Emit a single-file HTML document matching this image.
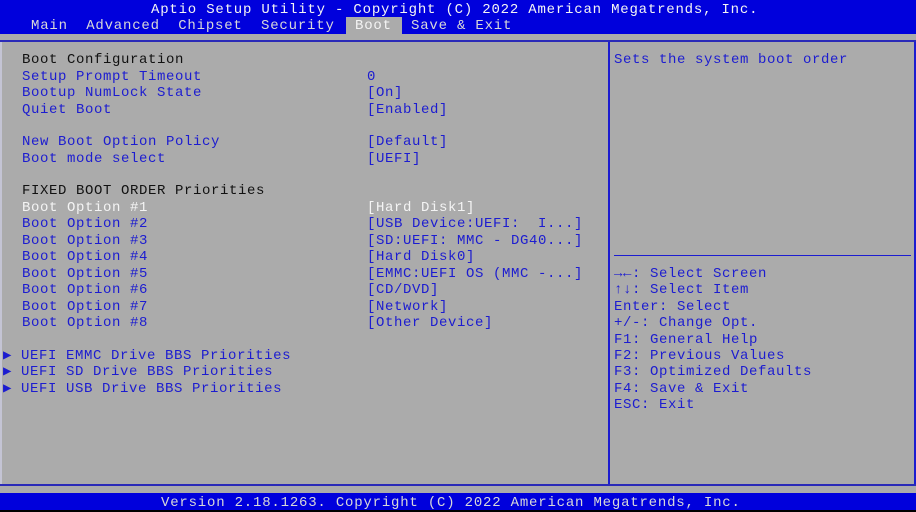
<!DOCTYPE html>
<html><head><meta charset="utf-8"><style>
*{margin:0;padding:0;box-sizing:border-box}
body{width:916px;height:512px;background:#ababab;position:relative;overflow:hidden;font-family:"Liberation Mono","DejaVu Sans Mono",monospace;font-size:14px;letter-spacing:0.6px}
.t{position:absolute;white-space:pre;line-height:16px;height:16px}
.b{color:#1c1cd0}.k{color:#111}.w{color:#f4f4f4}.h{color:#d8d8d8}
.x{letter-spacing:0.8px}
</style></head><body>
<div style="position:absolute;left:0;top:0;width:916px;height:34px;background:#0000dc"></div>
<div class="t w x" style="left:151px;top:2px">Aptio Setup Utility - Copyright (C) 2022 American Megatrends, Inc.</div>
<div class="t h x" style="left:31px;top:18px">Main  Advanced  Chipset  Security</div>
<div style="position:absolute;left:346px;top:17px;width:56px;height:17px;background:#ababab"></div>
<div class="t w x" style="left:355px;top:18px">Boot</div>
<div class="t h x" style="left:411px;top:18px">Save &amp; Exit</div>
<div style="position:absolute;left:0;top:40px;width:916px;height:2px;background:#2a2ab8"></div>
<div style="position:absolute;left:0;top:484px;width:916px;height:2px;background:#2a2ab8"></div>
<div style="position:absolute;left:0;top:42px;width:2px;height:442px;background:#c4c4d4"></div>
<div style="position:absolute;left:608px;top:42px;width:2px;height:442px;background:#1c1cd0"></div>
<div style="position:absolute;left:914px;top:42px;width:2px;height:442px;background:#1c1cd0"></div>
<div style="position:absolute;left:614px;top:255px;width:297px;height:1px;background:#1c1cd0"></div>
<div style="position:absolute;left:0;top:493px;width:916px;height:17px;background:#0000dc"></div>
<div style="position:absolute;left:0;top:510px;width:916px;height:2px;background:#000"></div>
<div class="t h x" style="left:161px;top:495px">Version 2.18.1263. Copyright (C) 2022 American Megatrends, Inc.</div>

<div style="position:absolute;left:0;top:2px;width:916px;height:420px">
<div class="t k" style="left:22px;top:50px">Boot Configuration</div>
<div class="t b" style="left:22px;top:67px">Setup Prompt Timeout</div><div class="t b" style="left:367px;top:67px">0</div>
<div class="t b" style="left:22px;top:83px">Bootup NumLock State</div><div class="t b" style="left:367px;top:83px">[On]</div>
<div class="t b" style="left:22px;top:100px">Quiet Boot</div><div class="t b" style="left:367px;top:100px">[Enabled]</div>
<div class="t b" style="left:22px;top:132px">New Boot Option Policy</div><div class="t b" style="left:367px;top:132px">[Default]</div>
<div class="t b" style="left:22px;top:149px">Boot mode select</div><div class="t b" style="left:367px;top:149px">[UEFI]</div>
<div class="t k" style="left:22px;top:181px">FIXED BOOT ORDER Priorities</div>
<div class="t w" style="left:22px;top:198px">Boot Option #1</div><div class="t w" style="left:367px;top:198px">[Hard Disk1]</div>
<div class="t b" style="left:22px;top:214px">Boot Option #2</div><div class="t b" style="left:367px;top:214px">[USB Device:UEFI:  I...]</div>
<div class="t b" style="left:22px;top:231px">Boot Option #3</div><div class="t b" style="left:367px;top:231px">[SD:UEFI: MMC - DG40...]</div>
<div class="t b" style="left:22px;top:247px">Boot Option #4</div><div class="t b" style="left:367px;top:247px">[Hard Disk0]</div>
<div class="t b" style="left:22px;top:264px">Boot Option #5</div><div class="t b" style="left:367px;top:264px">[EMMC:UEFI OS (MMC -...]</div>
<div class="t b" style="left:22px;top:280px">Boot Option #6</div><div class="t b" style="left:367px;top:280px">[CD/DVD]</div>
<div class="t b" style="left:22px;top:297px">Boot Option #7</div><div class="t b" style="left:367px;top:297px">[Network]</div>
<div class="t b" style="left:22px;top:313px">Boot Option #8</div><div class="t b" style="left:367px;top:313px">[Other Device]</div>
<div class="t b" style="left:3px;top:346px">▶ UEFI EMMC Drive BBS Priorities</div>
<div class="t b" style="left:3px;top:362px">▶ UEFI SD Drive BBS Priorities</div>
<div class="t b" style="left:3px;top:379px">▶ UEFI USB Drive BBS Priorities</div>

<div class="t b" style="left:614px;top:50px">Sets the system boot order</div>
<div class="t b" style="left:614px;top:264px">→←: Select Screen</div>
<div class="t b" style="left:614px;top:280px">↑↓: Select Item</div>
<div class="t b" style="left:614px;top:297px">Enter: Select</div>
<div class="t b" style="left:614px;top:313px">+/-: Change Opt.</div>
<div class="t b" style="left:614px;top:330px">F1: General Help</div>
<div class="t b" style="left:614px;top:346px">F2: Previous Values</div>
<div class="t b" style="left:614px;top:362px">F3: Optimized Defaults</div>
<div class="t b" style="left:614px;top:379px">F4: Save &amp; Exit</div>
<div class="t b" style="left:614px;top:395px">ESC: Exit</div>
</div>
</body></html>
